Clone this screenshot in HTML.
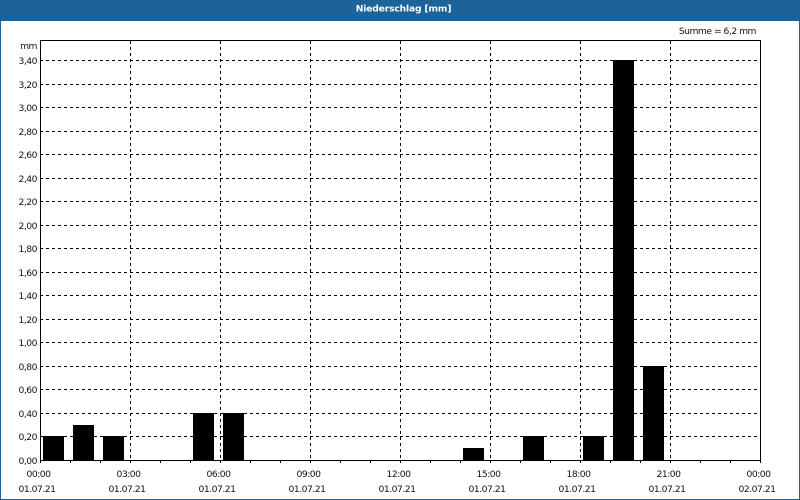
<!DOCTYPE html>
<html><head><meta charset="utf-8"><style>
html,body{margin:0;padding:0;background:#fff}
svg{display:block}
text{font-family:"DejaVu Sans","Liberation Sans",sans-serif;font-size:9.2px;fill:#111;letter-spacing:-0.5px}
</style></head><body>
<svg width="800" height="500" viewBox="0 0 800 500" xmlns="http://www.w3.org/2000/svg">
<rect width="800" height="500" fill="#fff"/>
<rect x="0" y="0" width="800" height="21" fill="#1b6399"/>
<rect x="0" y="0" width="1" height="500" fill="#1b6399"/>
<rect x="799" y="0" width="1" height="500" fill="#1b6399"/>
<rect x="0" y="499" width="800" height="1" fill="#1b6399"/>
<text x="403.500" y="11.500" text-anchor="middle" style="font-weight:bold;fill:#fff;font-size:9.2px;letter-spacing:-0.18px">Niederschlag [mm]</text>
<text x="756" y="34" text-anchor="end">Summe = 6,2 mm</text>
<g shape-rendering="crispEdges" stroke="#000" stroke-width="1" stroke-dasharray="3 3" fill="none">
<path d="M40 60.5H760M40 84.5H760M40 107.5H760M40 131.5H760M40 154.5H760M40 178.5H760M40 201.5H760M40 225.5H760M40 248.5H760M40 272.5H760M40 295.5H760M40 319.5H760M40 342.5H760M40 366.5H760M40 389.5H760M40 413.5H760M40 436.5H760"/>
<path d="M130.5 41V460M220.5 41V460M310.5 41V460M400.5 41V460M490.5 41V460M580.5 41V460M670.5 41V460"/>
</g>
<g shape-rendering="crispEdges" fill="#000">
<rect x="43" y="436" width="21" height="24"/>
<rect x="73" y="425" width="21" height="35"/>
<rect x="103" y="436" width="21" height="24"/>
<rect x="193" y="413" width="21" height="47"/>
<rect x="223" y="413" width="21" height="47"/>
<rect x="463" y="448" width="21" height="12"/>
<rect x="523" y="436" width="21" height="24"/>
<rect x="583" y="436" width="21" height="24"/>
<rect x="613" y="60" width="21" height="400"/>
<rect x="643" y="366" width="21" height="94"/>
</g>
<g shape-rendering="crispEdges" stroke="#000" stroke-width="1" fill="none">
<path d="M40.5 40.5H760.5V460.5H40.5Z"/>
<path d="M40.5 460V463M70.5 460V463M100.5 460V463M130.5 460V463M160.5 460V463M190.5 460V463M220.5 460V463M250.5 460V463M280.5 460V463M310.5 460V463M340.5 460V463M370.5 460V463M400.5 460V463M430.5 460V463M460.5 460V463M490.5 460V463M520.5 460V463M550.5 460V463M580.5 460V463M610.5 460V463M640.5 460V463M670.5 460V463M700.5 460V463M730.5 460V463M760.5 460V463"/>
</g>
<g text-anchor="end">
<text x="37" y="49">mm</text>
<text x="37" y="64">3,40</text><text x="37" y="88">3,20</text><text x="37" y="111">3,00</text><text x="37" y="135">2,80</text><text x="37" y="158">2,60</text><text x="37" y="182">2,40</text><text x="37" y="205">2,20</text><text x="37" y="229">2,00</text><text x="37" y="252">1,80</text><text x="37" y="276">1,60</text><text x="37" y="299">1,40</text><text x="37" y="323">1,20</text><text x="37" y="346">1,00</text><text x="37" y="370">0,80</text><text x="37" y="393">0,60</text><text x="37" y="417">0,40</text><text x="37" y="440">0,20</text><text x="37" y="464">0,00</text>
</g>
<g text-anchor="middle">
<text x="38.500" y="477">00:00</text><text x="128.500" y="477">03:00</text><text x="218.500" y="477">06:00</text><text x="308.500" y="477">09:00</text><text x="398.500" y="477">12:00</text><text x="488.500" y="477">15:00</text><text x="578.500" y="477">18:00</text><text x="668.500" y="477">21:00</text><text x="758.500" y="477">00:00</text>
<text x="37" y="492">01.07.21</text><text x="127" y="492">01.07.21</text><text x="217" y="492">01.07.21</text><text x="307" y="492">01.07.21</text><text x="397" y="492">01.07.21</text><text x="487" y="492">01.07.21</text><text x="577" y="492">01.07.21</text><text x="667" y="492">01.07.21</text><text x="757" y="492">02.07.21</text>
</g>
</svg>
</body></html>
